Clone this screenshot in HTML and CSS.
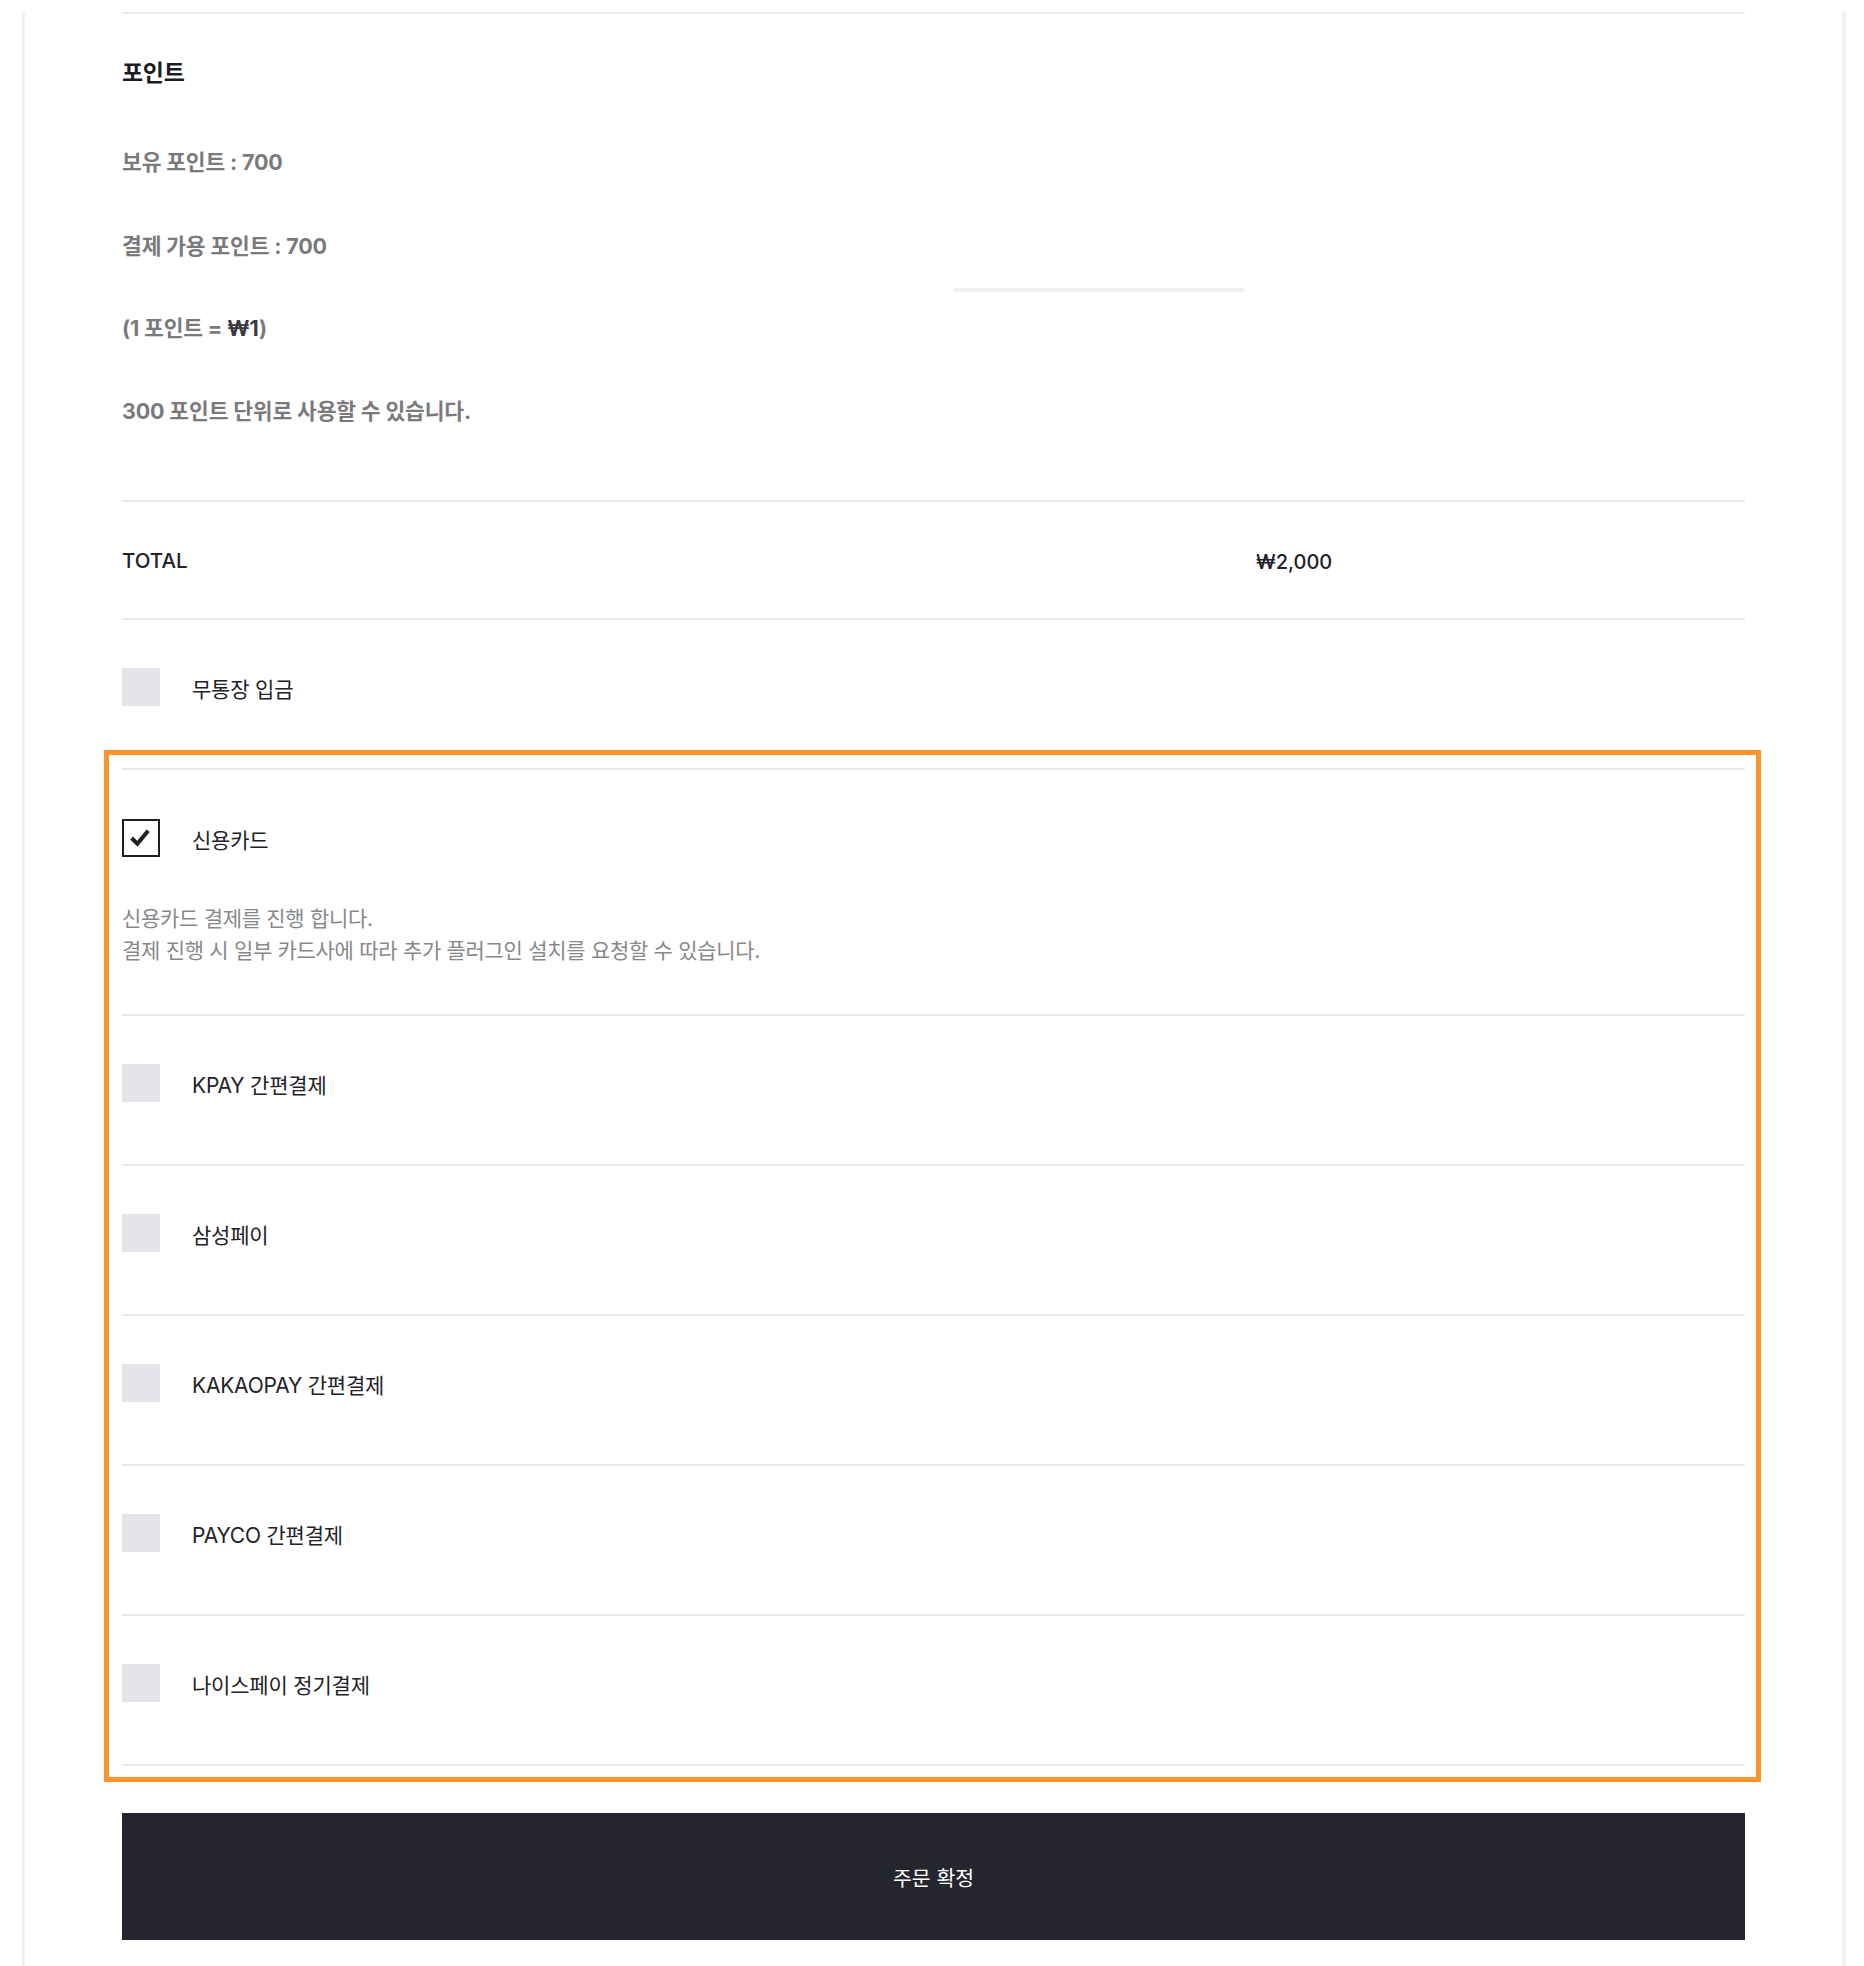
FILE: index.html
```html
<!DOCTYPE html>
<html lang="ko">
<head>
<meta charset="utf-8">
<title>주문</title>
<link rel="stylesheet" href="styles.css">
</head>
<body>
<div class="page">
  <section class="points">
    <h3 class="points-title">포인트</h3>
    <p class="points-line">보유 포인트 : 700</p>
    <div class="points-row">
      <p class="points-line">결제 가용 포인트 : 700</p>
      <div class="points-input"></div>
    </div>
    <p class="points-line">(1 포인트 = <span class="won">₩1</span>)</p>
    <p class="points-line">300 포인트 단위로 사용할 수 있습니다.</p>
  </section>

  <div class="total-row">
    <span class="total-label">TOTAL</span>
    <span class="total-value">₩2,000</span>
  </div>

  <div class="pay-item first">
    <div class="pay-head"><span class="box"></span><span class="pay-label">무통장 입금</span></div>
  </div>

  <div class="pay-group">
    <div class="pay-item open">
      <div class="pay-head">
        <span class="box checked"><svg viewBox="0 0 38 38" width="34" height="34"><path d="M8.5 19 L15 25.5 L27 11" fill="none" stroke="#1e1e24" stroke-width="4.4" stroke-linecap="butt" stroke-linejoin="miter"/></svg></span>
        <span class="pay-label">신용카드</span>
      </div>
      <p class="pay-desc">신용카드 결제를 진행 합니다.<br>결제 진행 시 일부 카드사에 따라 추가 플러그인 설치를 요청할 수 있습니다.</p>
    </div>
    <div class="pay-item">
      <div class="pay-head"><span class="box"></span><span class="pay-label">KPAY 간편결제</span></div>
    </div>
    <div class="pay-item">
      <div class="pay-head"><span class="box"></span><span class="pay-label">삼성페이</span></div>
    </div>
    <div class="pay-item">
      <div class="pay-head"><span class="box"></span><span class="pay-label">KAKAOPAY 간편결제</span></div>
    </div>
    <div class="pay-item">
      <div class="pay-head"><span class="box"></span><span class="pay-label">PAYCO 간편결제</span></div>
    </div>
    <div class="pay-item last">
      <div class="pay-head"><span class="box"></span><span class="pay-label">나이스페이 정기결제</span></div>
    </div>
  </div>

  <button class="confirm" type="button">주문 확정</button>
</div>
</body>
</html>
```

FILE: styles.css
```css
html, body {
  margin: 0;
  padding: 0;
  background: #ffffff;
}
body {
  font-family: "Inter", "Noto Sans CJK KR", sans-serif;
  color: #222228;
}
.page {
  margin: 0 18px 0 22px;
  border-left: 3px solid #f1f1f3;
  border-right: 4px solid #f1f1f3;
  background: #ffffff;
  padding: 0 97px 28px;
  min-height: 1966px;
  box-sizing: border-box;
}
.points {
  margin-top: 12px;
  border-top: 2px solid #ebebee;
  padding-top: 45px;
  padding-bottom: 75px;
}
.points-title {
  margin: 0;
  font-size: 23px;
  line-height: 28px;
  font-weight: 700;
  color: #1c1c24;
  letter-spacing: -0.3px;
}
.points-line {
  margin: 0;
  font-size: 21.5px;
  line-height: 28px;
  font-weight: 700;
  color: #7a7a7c;
  letter-spacing: -0.15px;
}
.won { color: #3a3a40; }
.points-title + .points-line { margin-top: 61px; }
.points-row { margin-top: 56px; position: relative; }
.points-row + .points-line { margin-top: 54px; }
.points-line + .points-line { margin-top: 55px; }
.points-input {
  position: absolute;
  left: 832px;
  top: 56px;
  width: 290px;
  height: 4px;
  background: #f0f0f2;
}
.total-row {
  display: grid;
  grid-template-columns: 1134px 1fr;
  align-items: center;
  height: 116px;
  border-top: 2px solid #e9e9ec;
  font-size: 20.5px;
  font-weight: 500;
  color: #222228;
}
.total-value { padding-top: 3px; font-size: 20px; }
.pay-item {
  border-top: 2px solid #e9e9ee;
  padding: 48px 0 62px;
}
.pay-item.first { padding-bottom: 44px; }
.pay-item.open { padding: 49px 0 47px; }
.pay-item.last { border-bottom: 2px solid #e9e9ee; }
.pay-head {
  display: flex;
  align-items: center;
  gap: 32px;
  height: 38px;
}
.box {
  width: 38px;
  height: 38px;
  background: #e4e5ea;
  box-sizing: border-box;
  flex: none;
  display: flex;
  align-items: center;
  justify-content: center;
}
.box.checked {
  background: #ffffff;
  border: 2px solid #1e1e24;
}
.pay-label {
  font-size: 21px;
  color: #222228;
  padding-top: 2px;
  letter-spacing: -0.2px;
}
.pay-desc {
  margin: 46px 0 0;
  font-size: 21px;
  line-height: 32px;
  color: #88888c;
  letter-spacing: -0.3px;
}
.pay-group {
  margin: 0 -16px 0 -18px;
  border: 5px solid #fd942b;
  padding: 13px 11px 11px 13px;
}
.confirm {
  display: block;
  width: 100%;
  height: 127px;
  margin-top: 31px;
  border: 0;
  background: #25252e;
  color: #ffffff;
  font-family: "Inter", "Noto Sans CJK KR", sans-serif;
  font-size: 20.5px;
  cursor: pointer;
}
```
